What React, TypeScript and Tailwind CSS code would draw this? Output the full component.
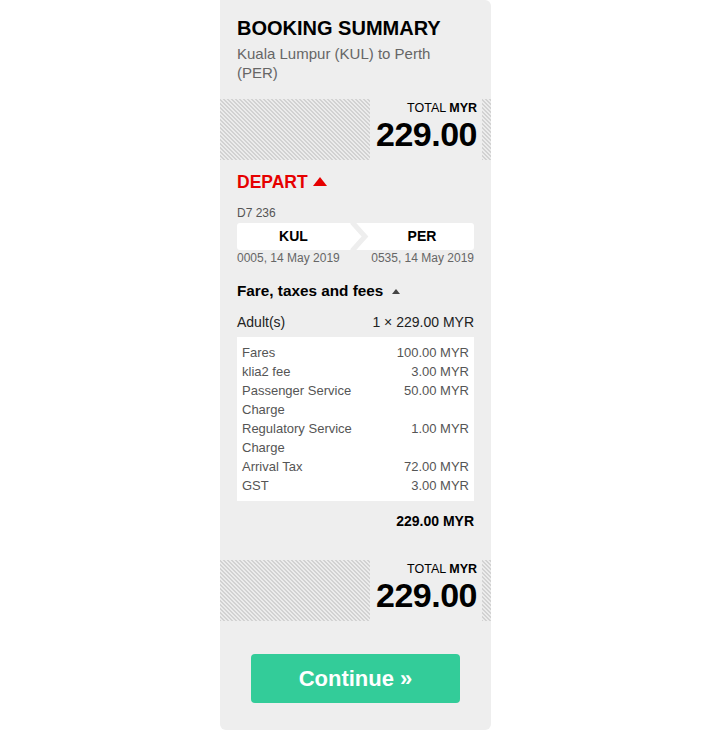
import React from "react";

const hatch =
  "bg-[repeating-linear-gradient(45deg,#d2d2d2_0px,#d2d2d2_1.414px,#ececec_1.414px,#ececec_2.828px)]";

function TotalBlock() {
  return (
    <div className="flex h-[61px]">
      <div className={`flex-1 ${hatch}`}></div>
      <div className="w-[112px] bg-[#eeeeee] pr-[5px] pt-[2px] text-right text-black">
        <div className="text-[12.5px] leading-[14px]">
          TOTAL <span className="font-bold">MYR</span>
        </div>
        <div className="text-[34px] font-bold leading-[38px] tracking-[-0.5px]">229.00</div>
      </div>
      <div className={`w-[9px] ${hatch}`}></div>
    </div>
  );
}

const fees = [
  ["Fares", "100.00 MYR"],
  ["klia2 fee", "3.00 MYR"],
  ["Passenger Service Charge", "50.00 MYR"],
  ["Regulatory Service Charge", "1.00 MYR"],
  ["Arrival Tax", "72.00 MYR"],
  ["GST", "3.00 MYR"],
];

export default function App() {
  return (
    <div className="min-h-[736px] bg-white font-['Liberation_Sans',Arial,sans-serif]">
      <div className="ml-[220px] w-[271px] rounded-b-[6px] rounded-tr-[6px] bg-[#eeeeee] pb-[27px]">
        {/* header */}
        <div className="px-[17px] pt-[16px] pb-[17px]">
          <h1 className="text-[20px] font-bold leading-[24px] text-black">BOOKING SUMMARY</h1>
          <p className="mt-[4px] w-[210px] text-[15px] leading-[19px] text-[#666666]">
            Kuala Lumpur (KUL) to Perth (PER)
          </p>
        </div>

        <TotalBlock />

        <div className="px-[17px]">
          {/* depart */}
          <div className="mt-[12px] flex items-center gap-[5px]">
            <span className="text-[17.5px] font-bold leading-[20px] text-[#e60000]">DEPART</span>
            <span className="mt-[-2px] h-0 w-0 border-x-[7px] border-b-[9px] border-x-transparent border-b-[#e60000]"></span>
          </div>

          <div className="mt-[14px] text-[12px] leading-[14px] text-[#555555]">D7 236</div>

          <div className="mt-[3px] flex h-[27px] items-stretch overflow-hidden rounded-[3px] bg-white">
            <div className="flex w-[113px] items-center justify-center text-[14px] font-bold text-black">
              KUL
            </div>
            <svg className="shrink-0" width="20" height="27" viewBox="0 0 20 27">
              <path d="M2 -1 L15 13.5 L2 28" fill="none" stroke="#eeeeee" strokeWidth="5" />
            </svg>
            <div className="flex flex-1 items-center justify-center text-[14px] font-bold text-black">
              PER
            </div>
          </div>

          <div className="mt-[1px] flex justify-between text-[12px] leading-[14px] text-[#666666]">
            <span>0005, 14 May 2019</span>
            <span>0535, 14 May 2019</span>
          </div>

          {/* fare */}
          <div className="mt-[17px] flex items-center gap-[9px]">
            <span className="text-[15.3px] font-bold leading-[18px] text-black">Fare, taxes and fees</span>
            <span className="h-0 w-0 border-x-[4px] border-b-[5px] border-x-transparent border-b-[#444444]"></span>
          </div>

          <div className="mt-[14px] flex justify-between text-[14px] leading-[16px] text-[#222222]">
            <span>Adult(s)</span>
            <span>1 × 229.00 MYR</span>
          </div>

          <div className="mt-[7px] bg-white px-[5px] py-[6px] text-[13px] leading-[19px] text-[#555555]">
            {fees.map(([label, amt]) => (
              <div key={label} className="flex justify-between">
                <span className="w-[120px]">{label}</span>
                <span>{amt}</span>
              </div>
            ))}
          </div>

          <div className="mt-[12px] text-right text-[14px] font-bold leading-[16px] text-black">229.00 MYR</div>
        </div>

        <div className="mt-[31px]">
          <TotalBlock />
        </div>

        <div className="mt-[33px] flex justify-center">
          <button className="h-[49px] w-[209px] rounded-[4px] bg-[#33cc99] text-[22px] font-bold text-white">
            Continue »
          </button>
        </div>
      </div>
    </div>
  );
}
